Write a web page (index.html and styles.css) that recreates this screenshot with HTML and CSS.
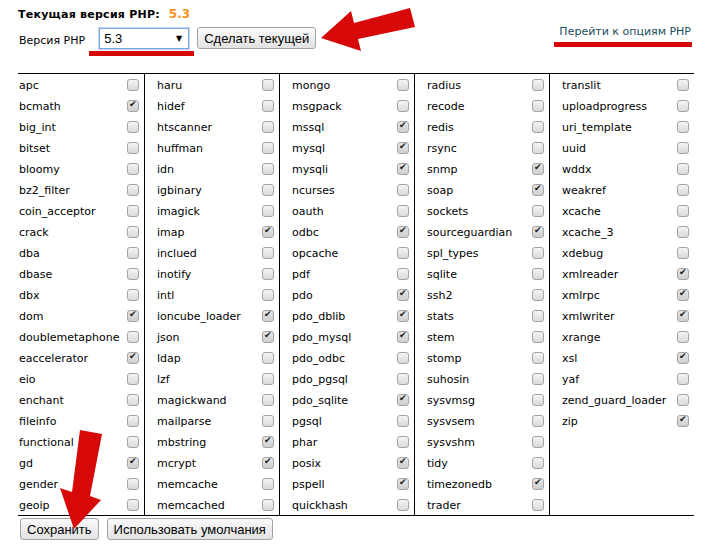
FILE: index.html
```html
<!DOCTYPE html>
<html lang="ru">
<head>
  <meta charset="UTF-8" />
  <title>Версия PHP</title>
  <link rel="stylesheet" href="styles.css">
</head>
<body>
  <div class="page">
    <div class="current"><span class="current-title">Текущая версия PHP:</span> <span class="current-num">5.3</span></div>

    <div class="controls">
      <span class="label">Версия PHP</span>
      <div class="select"><span>5.3</span><span class="select-arrow">▼</span></div>
      <button class="btn">Сделать текущей</button>
      <a class="options-link" href="#">Перейти к опциям PHP</a>
    </div>

    <div class="ext-table" id="extTable"></div>

    <div class="actions">
      <button class="btn">Сохранить</button>
      <button class="btn">Использовать умолчания</button>
    </div>
  </div>

  <!-- annotation marks drawn over the page -->
  <svg class="marks" width="712" height="547" viewBox="0 0 712 547">
    <rect x="89" y="51" width="105" height="5" />
    <rect x="554" y="42" width="138" height="5" />
    <polygon points="321,38 351,11 354,23 410,8 415,27 358,39 361,51" />
    <polygon points="80,430 102,434 90,496 101,500 74,529 60,488 72,492" />
  </svg>

  <script>
    // "*" marks an enabled extension
    const columns = [
      ['apc', 'bcmath*', 'big_int', 'bitset', 'bloomy', 'bz2_filter', 'coin_acceptor', 'crack', 'dba', 'dbase', 'dbx', 'dom*', 'doublemetaphone', 'eaccelerator*', 'eio', 'enchant', 'fileinfo', 'functional', 'gd*', 'gender', 'geoip'],
      ['haru', 'hidef', 'htscanner', 'huffman', 'idn', 'igbinary', 'imagick', 'imap*', 'inclued', 'inotify', 'intl', 'ioncube_loader*', 'json*', 'ldap', 'lzf', 'magickwand', 'mailparse', 'mbstring*', 'mcrypt*', 'memcache', 'memcached'],
      ['mongo', 'msgpack', 'mssql*', 'mysql*', 'mysqli*', 'ncurses', 'oauth', 'odbc*', 'opcache', 'pdf', 'pdo*', 'pdo_dblib*', 'pdo_mysql*', 'pdo_odbc', 'pdo_pgsql', 'pdo_sqlite*', 'pgsql', 'phar', 'posix*', 'pspell*', 'quickhash'],
      ['radius', 'recode', 'redis', 'rsync', 'snmp*', 'soap*', 'sockets', 'sourceguardian*', 'spl_types', 'sqlite', 'ssh2', 'stats', 'stem', 'stomp', 'suhosin', 'sysvmsg', 'sysvsem', 'sysvshm', 'tidy', 'timezonedb*', 'trader'],
      ['translit', 'uploadprogress', 'uri_template', 'uuid', 'wddx', 'weakref', 'xcache', 'xcache_3', 'xdebug', 'xmlreader*', 'xmlrpc*', 'xmlwriter*', 'xrange', 'xsl*', 'yaf', 'zend_guard_loader', 'zip*']
    ];

    const table = document.getElementById('extTable');

    columns.forEach(list => {
      const col = document.createElement('div');
      col.className = 'ext-col';
      list.forEach(item => {
        const on = item.endsWith('*');
        const name = on ? item.slice(0, -1) : item;
        const row = document.createElement('label');
        row.className = 'ext-row';
        row.innerHTML = `<span>${name}</span><input type="checkbox" name="ext[]" value="${name}"${on ? ' checked' : ''}>`;
        col.appendChild(row);
      });
      table.appendChild(col);
    });
  </script>
</body>
</html>
```

FILE: styles.css
```css
body {
  margin: 0;
  font-family: 'DejaVu Sans', Verdana, sans-serif;
  font-size: 11px;
  color: #000;
  background: #fff;
  position: relative;
  width: 712px;
  height: 547px;
  overflow: hidden;
}
.page {
  padding: 6px 18px 0 18px;
  width: 676px;
}
.current {
  height: 16px;
  line-height: 16px;
  font-weight: bold;
}
.current-title {
  letter-spacing: 0.25px;
}
.current-num {
  color: #f7931d;
  font-size: 12px;
  margin-left: 5px;
}
.controls {
  display: flex;
  align-items: center;
  height: 22px;
  margin-top: 5px;
}
.label {
  margin-left: 1px;
  padding-top: 5px;
}
.select {
  box-sizing: border-box;
  width: 90px;
  height: 21px;
  margin-left: 14px;
  border: 1px solid #78a6de;
  box-shadow: 0 0 0 1px #c3d7f1;
  background: #fff;
  display: flex;
  align-items: center;
  justify-content: space-between;
  padding: 0 6px 0 4px;
  font-family: 'Liberation Sans', Arial, sans-serif;
  font-size: 13px;
}
.select-arrow {
  font-family: 'DejaVu Sans', sans-serif;
  font-size: 8px;
}
.btn {
  box-sizing: border-box;
  height: 22px;
  padding: 0 6px;
  border: 1px solid #a3a3a3;
  border-radius: 3px;
  background: linear-gradient(#fafafa, #e2e2e2);
  font-family: 'Liberation Sans', Arial, sans-serif;
  font-size: 13px;
  color: #000;
}
.controls .btn {
  margin-left: 8px;
}
.options-link {
  margin-left: auto;
  margin-right: 3px;
  align-self: flex-start;
  margin-top: -2px;
  line-height: 14px;
  color: #1b4e5e;
  text-decoration: none;
}
.ext-table {
  display: grid;
  grid-template-columns: 126px 135px 135px 135px 145px;
  margin-top: 24px;
  border-top: 1px solid #000;
  border-bottom: 1px solid #000;
}
.ext-col {
  box-sizing: border-box;
  padding: 0 5px 0 12px;
  border-left: 1px solid #000;
}
.ext-col:first-child {
  padding-left: 1px;
  border-left: none;
}
.ext-row {
  display: flex;
  align-items: center;
  justify-content: space-between;
  height: 21px;
}
.ext-row span {
  padding-top: 2px;
}
.ext-row input {
  appearance: none;
  -webkit-appearance: none;
  box-sizing: border-box;
  width: 12px;
  height: 12px;
  margin: 1px 0 0 0;
  border: 1px solid #a4a4a4;
  border-radius: 3px;
  background: linear-gradient(#f4f4f4, #dadada);
  position: relative;
}
.ext-row input:checked {
  background: linear-gradient(#e6e6e6, #cfcfcf);
}
.ext-row input:checked::after {
  content: '✔';
  position: absolute;
  left: 1px;
  top: -2px;
  font-size: 9px;
  color: #222;
}
.actions {
  display: flex;
  gap: 8px;
  margin-top: 2px;
  padding-left: 2px;
}
.marks {
  position: absolute;
  left: 0;
  top: 0;
  pointer-events: none;
}
.marks rect,
.marks polygon {
  fill: #d60808;
}
```
